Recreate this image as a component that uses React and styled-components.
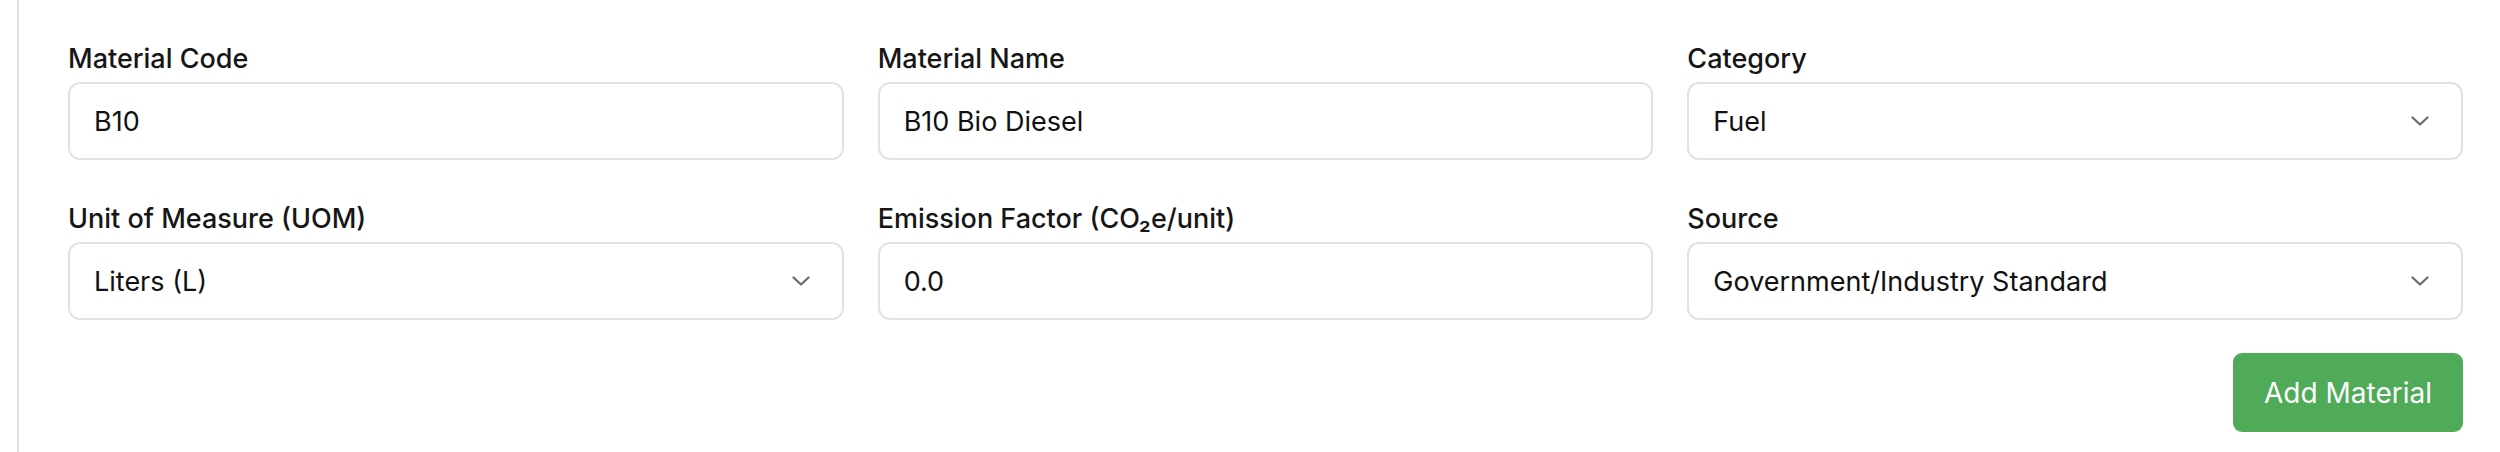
import styled, { createGlobalStyle } from "styled-components";

const GlobalStyle = createGlobalStyle`
  html, body {
    margin: 0;
    background: #ffffff;
  }
  body {
    font-family: Inter, "Noto Sans", "Liberation Sans", sans-serif;
    color: #111111;
  }
  * {
    box-sizing: border-box;
  }
`;

const fields = [
  { label: "Material Code", value: "B10" },
  { label: "Material Name", value: "B10 Bio Diesel" },
  { label: "Category", value: "Fuel", select: true },
  { label: "Unit of Measure (UOM)", value: "Liters (L)", select: true },
  { label: "Emission Factor (CO₂e/unit)", value: "0.0" },
  { label: "Source", value: "Government/Industry Standard", select: true },
];

const Chevron = () => (
  <svg width="18" height="10" viewBox="0 0 18 10" fill="none">
    <path
      d="M1.5 1.5L9 8.5L16.5 1.5"
      stroke="#6b6b6b"
      strokeWidth="2.2"
      strokeLinecap="round"
      strokeLinejoin="round"
    />
  </svg>
);

const App = () => {
  return (
    <>
      <GlobalStyle />
      <Panel>
        <Form>
          <Grid>
            {fields.map((f) => (
              <Field key={f.label}>
                <Label>{f.label}</Label>
                <Control>
                  <Value>{f.value}</Value>
                  {f.select && <Chevron />}
                </Control>
              </Field>
            ))}
          </Grid>
          <Actions>
            <Button>Add Material</Button>
          </Actions>
        </Form>
      </Panel>
    </>
  );
};

const Panel = styled.div`
  margin-left: 17px;
  border-left: 2px solid #e3e3e3;
  min-height: 452px;
  background: #ffffff;
`;

const Form = styled.form`
  padding: 40px 37px 20px 49px;
`;

const Grid = styled.div`
  display: grid;
  grid-template-columns: repeat(3, 1fr);
  column-gap: 34px;
  row-gap: 40px;
`;

const Field = styled.div`
  display: flex;
  flex-direction: column;
  gap: 4px;
`;

const Label = styled.label`
  font-size: 27px;
  line-height: 38px;
  font-weight: 500;
  color: #161616;
`;

const Control = styled.div`
  height: 78px;
  border: 2px solid #e2e2e2;
  border-radius: 12px;
  padding: 0 32px 0 24px;
  display: flex;
  align-items: center;
  justify-content: space-between;
  background: #ffffff;
`;

const Value = styled.span`
  font-size: 27px;
  color: #111111;
`;

const Actions = styled.div`
  display: flex;
  justify-content: flex-end;
  margin-top: 33px;
`;

const Button = styled.button`
  width: 230px;
  height: 79px;
  border: none;
  border-radius: 9px;
  background: #4fab58;
  color: #ffffff;
  font-family: Inter, "Noto Sans", "Liberation Sans", sans-serif;
  font-size: 28px;
  font-weight: 400;
  cursor: pointer;
`;

export default App;
